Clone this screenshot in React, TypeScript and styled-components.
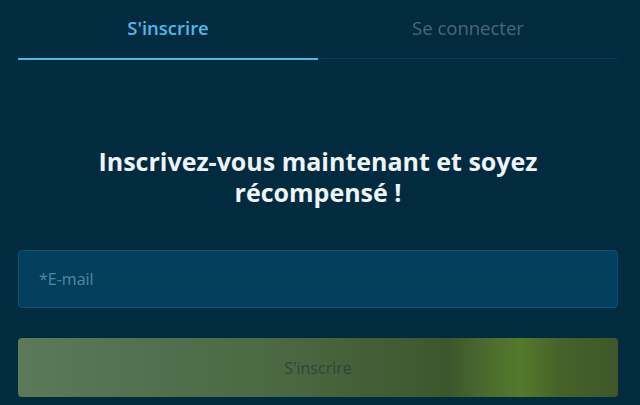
import React from "react";
import styled, { createGlobalStyle } from "styled-components";

const GlobalStyle = createGlobalStyle`
  html, body {
    margin: 0;
    padding: 0;
    background: #022b40;
  }
  body {
    font-family: "Open Sans", "Noto Sans", sans-serif;
  }
`;

const Page = styled.div`
  width: 640px;
  height: 405px;
  padding: 0 22px 0 18px;
  box-sizing: border-box;
  overflow: hidden;
  background: #022b40;
`;

const Tabs = styled.div`
  display: flex;
  height: 60px;
`;

const Tab = styled.div<{ $active?: boolean }>`
  flex: 1;
  display: flex;
  align-items: center;
  justify-content: center;
  padding-bottom: 3px;
  box-sizing: border-box;
  font-size: 18.5px;
  font-weight: ${(p) => (p.$active ? 600 : 400)};
  color: ${(p) => (p.$active ? "#4fb9ee" : "#4a6878")};
  border-bottom: ${(p) => (p.$active ? "2px solid #55b6e6" : "1px solid #0b3b52")};
  margin-bottom: ${(p) => (p.$active ? "0" : "1px")};
`;

const Title = styled.h1`
  margin: 86px 0 0;
  text-align: center;
  font-family: "Open Sans", "Noto Sans", sans-serif;
  font-weight: 700;
  font-size: 25px;
  line-height: 31px;
  color: #eef4f7;
`;

const EmailInput = styled.input`
  display: block;
  width: 100%;
  height: 58px;
  margin-top: 42px;
  padding: 0 20px;
  box-sizing: border-box;
  border: 1px solid #0a5473;
  border-radius: 4px;
  background: #013f5c;
  font-family: "Open Sans", sans-serif;
  font-size: 16px;
  color: #cfe3ec;
  outline: none;
  &::placeholder {
    color: #4f8aa3;
  }
`;

const SubmitButton = styled.button`
  display: block;
  width: 100%;
  height: 59px;
  margin-top: 30px;
  border: none;
  border-radius: 4px;
  background: linear-gradient(
    90deg,
    #5b7a59 0%,
    #527251 18%,
    #4b6b44 40%,
    #445f38 58%,
    #3d572c 72%,
    #4c6e2e 79%,
    #537a2c 84%,
    #466329 90%,
    #3f5729 100%
  );
  font-family: "Open Sans", sans-serif;
  font-size: 16px;
  color: #2d4636;
  cursor: pointer;
`;

export default function App() {
  return (
    <>
      <GlobalStyle />
      <Page>
        <Tabs>
          <Tab $active>S'inscrire</Tab>
          <Tab>Se connecter</Tab>
        </Tabs>
        <Title>
          Inscrivez-vous maintenant et soyez
          <br />
          récompensé !
        </Title>
        <EmailInput placeholder="*E-mail" />
        <SubmitButton>S'inscrire</SubmitButton>
      </Page>
    </>
  );
}
